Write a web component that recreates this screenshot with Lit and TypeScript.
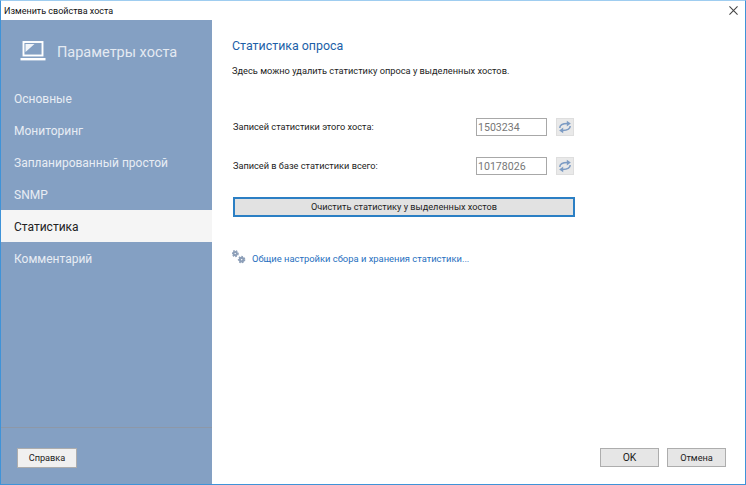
import { LitElement, html, svg, css } from "lit";
import { customElement } from "lit/decorators.js";

const refresh = html`<svg width="14" height="14" viewBox="0 0 14 14" fill="none" stroke="#7d9cc4" stroke-width="1.5"><path d="M1.8 8C1.8 5.2 4 3.6 9.5 3.6"/><path d="M8.8 .8l4 2.8-4 2.8z" fill="#7d9cc4" stroke="none"/><path d="M12.2 6C12.2 8.8 10 10.4 4.5 10.4"/><path d="M5.2 7.6l-4 2.8 4 2.8z" fill="#7d9cc4" stroke="none"/></svg>`;

const gear = (x: number, y: number, r: number) => svg`<g transform="translate(${x} ${y})"><circle r="${r}" fill="none" stroke="#8d9fb8" stroke-width="2.2"/><circle r="${r + 1.3}" fill="none" stroke="#8d9fb8" stroke-width="1.3" stroke-dasharray="1.6 1.2"/><circle r="${r * 0.4}" fill="#f4f6f9"/></g>`;

@customElement("app-root")
export class AppRoot extends LitElement {
  static styles = css`
    :host { display: block; width: 746px; height: 485px; font-family: Roboto, "Noto Sans", sans-serif; font-size: 9.2px; color: #1c1c1c; }
    .win { width: 746px; height: 485px; box-sizing: border-box; border: 1px solid #3f93d8; border-top-color: #9fcdf0; background: #fff; display: flex; flex-direction: column; }
    .title { height: 19px; flex: none; display: flex; align-items: center; justify-content: space-between; padding: 0 7px 0 3px; font-size: 9px; color: #111; }
    .close { display: flex; }
    .body { flex: 1; display: flex; min-height: 0; }
    .side { width: 211px; flex: none; background: #84a0c3; display: flex; flex-direction: column; color: #eef2f7; }
    .head { height: 62px; flex: none; display: flex; align-items: center; gap: 11px; padding: 0 0 0 19px; font-size: 14.5px; color: #e4eaf2; }
    .head span { padding-top: 2px; }
    .menu { display: flex; flex-direction: column; flex: 1; }
    .item { height: 32px; box-sizing: border-box; display: flex; align-items: center; padding: 2px 0 0 13px; font-size: 12px; color: #e8edf4; }
    .item.on { background: #f5f5f5; color: #222; }
    .foot { height: 57px; flex: none; border-top: 1px solid #8d98a8; display: flex; align-items: flex-start; padding: 20px 0 0 16px; box-sizing: border-box; }
    .btn { box-sizing: border-box; height: 20px; background: #e6e6e6; border: 1px solid #adadad; font-size: 9.2px; color: #222; display: flex; align-items: center; justify-content: center; }
    .help { width: 60px; background: #f0f0f0; padding-bottom: 1px; }
    .main { flex: 1; display: flex; flex-direction: column; padding: 18px 19px 17px 20px; min-width: 0; }
    h2 { margin: 0; font-size: 12.4px; font-weight: 400; color: #1d5fa8; line-height: 16px; }
    .desc { margin-top: 10px; line-height: 14px; font-size: 9.25px; }
    .row { display: flex; align-items: center; height: 20px; padding-left: 1px; }
    .row.first { margin-top: 39px; }
    .row.second { margin-top: 19px; }
    .label { width: 243px; flex: none; font-size: 9.2px; padding-bottom: 2px; }
    .field { width: 71px; height: 18px; box-sizing: border-box; border: 1px solid #a8a8a8; color: #777; font-size: 10.6px; display: flex; align-items: center; padding-left: 1px; }
    .sq { width: 18px; height: 18px; margin-left: 9px; box-sizing: border-box; background: #e9e9e9; border: 1px solid #dedede; display: flex; align-items: center; justify-content: center; }
    .clear { margin-top: 21px; width: 342px; height: 20px; margin-left: 1px; border: 2px solid #2b7fc4; background: #e2e2e2; font-size: 9.2px; padding-bottom: 1px; }
    .link { margin-top: 32px; display: flex; align-items: center; gap: 6px; color: #1f6fc0; font-size: 9.4px; height: 16px; }
    .link span { padding-top: 2px; }
    .spacer { flex: 1; }
    .actions { display: flex; justify-content: flex-end; gap: 8px; }
    .actions .btn { width: 59px; height: 19px; }
    .actions .ok { font-size: 10.4px; }
  `;

  render() {
    const items = ["Основные", "Мониторинг", "Запланированный простой", "SNMP", "Статистика", "Комментарий"];
    return html`<div class="win">
      <div class="title"><span>Изменить свойства хоста</span>
        <span class="close"><svg width="9" height="9" viewBox="0 0 10 10" stroke="#444" stroke-width="1.2"><path d="M.5.5l9 9M9.5.5l-9 9"/></svg></span></div>
      <div class="body">
        <aside class="side">
          <div class="head">
            <svg width="26" height="22" viewBox="0 0 25 22" fill="none"><rect x="3" y="2" width="19" height="13.5" stroke="#fff" stroke-width="1.9"/><path d="M5 4h9l-9 8z" fill="#f2f5f9"/><rect x="0" y="18" width="25" height="2.4" fill="#fff"/></svg>
            <span>Параметры хоста</span>
          </div>
          <div class="menu">
            ${items.map((t) => html`<div class="item ${t === "Статистика" ? "on" : ""}">${t}</div>`)}
          </div>
          <div class="foot"><div class="btn help">Справка</div></div>
        </aside>
        <main class="main">
          <h2>Статистика опроса</h2>
          <div class="desc">Здесь можно удалить статистику опроса у выделенных хостов.</div>
          <div class="row first"><span class="label">Записей статистики этого хоста:</span><span class="field">1503234</span><span class="sq">${refresh}</span></div>
          <div class="row second"><span class="label">Записей в базе статистики всего:</span><span class="field">10178026</span><span class="sq">${refresh}</span></div>
          <div class="btn clear">Очистить статистику у выделенных хостов</div>
          <div class="link"><svg width="14" height="14" viewBox="0 0 14 14">${gear(3.2, 3.6, 1.6)}${gear(9.6, 9.6, 1.8)}</svg><span>Общие настройки сбора и хранения статистики...</span></div>
          <div class="spacer"></div>
          <div class="actions"><div class="btn ok">OK</div><div class="btn">Отмена</div></div>
        </main>
      </div>
    </div>`;
  }
}
